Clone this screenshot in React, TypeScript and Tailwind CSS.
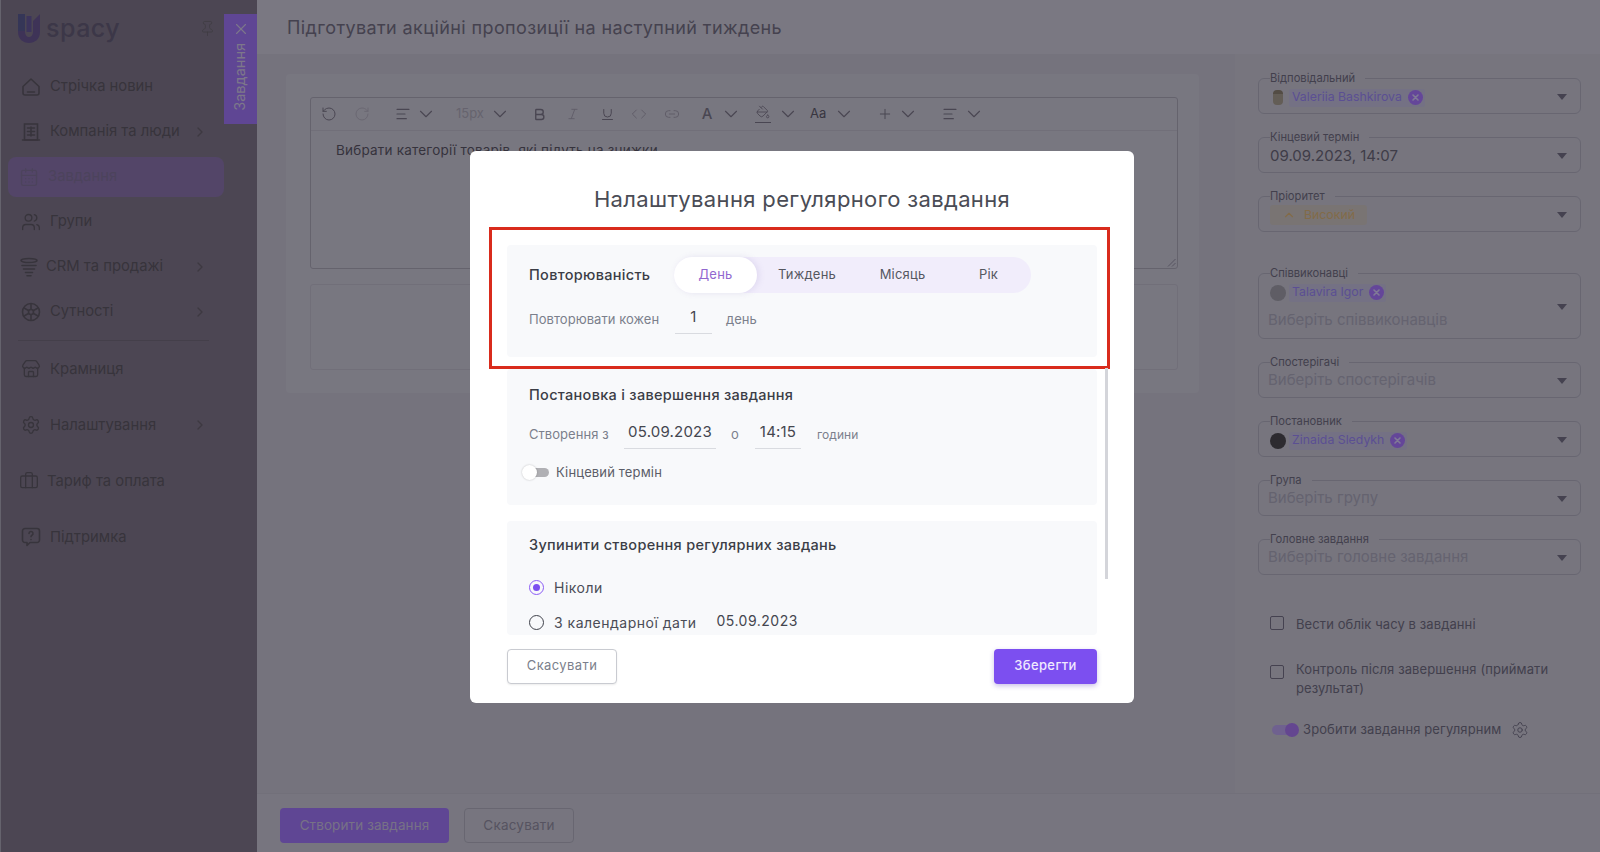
import React from "react";
import {
  CalendarDays, Users, ChevronRight, Store, Settings, Briefcase,
  Pin, X, RotateCcw, RotateCw, ChevronDown, Bold, Italic, Underline, Code, Link2, Plus, AlignLeft,
  PaintBucket, ChevronUp,
} from "lucide-react";

type IconProps = { size?: number; strokeWidth?: number; className?: string };

function HomeIcon({ size = 20, strokeWidth = 1.6, className }: IconProps) {
  return (
    <svg width={size} height={size} viewBox="0 0 20 20" fill="none" stroke="currentColor" strokeWidth={strokeWidth} strokeLinejoin="round" strokeLinecap="round" className={className}>
      <path d="M2 9.500 10 2l8 7.500V16a2 2 0 0 1-2 2H4a2 2 0 0 1-2-2z" />
      <path d="M6.500 15h7" />
    </svg>
  );
}
function BuildingIcon({ size = 20, strokeWidth = 1.6, className }: IconProps) {
  return (
    <svg width={size} height={size} viewBox="0 0 20 20" fill="none" stroke="currentColor" strokeWidth={strokeWidth} strokeLinecap="round" className={className}>
      <path d="M3.500 2h13v16h-13z" />
      <path d="M1.500 18h17M6.500 6h7M6.500 9.500h7M6.500 13h7M10 5v9" />
    </svg>
  );
}
function FunnelIcon({ size = 20, strokeWidth = 1.8, className }: IconProps) {
  return (
    <svg width={size} height={size} viewBox="0 0 20 20" fill="none" stroke="currentColor" strokeWidth={strokeWidth} strokeLinecap="round" className={className}>
      <ellipse cx="10" cy="3.500" rx="8" ry="2" />
      <path d="M3 8.500h14M4.500 12h11M6.500 15.500h7M8 18.800h4" />
    </svg>
  );
}
function WheelIcon({ size = 20, strokeWidth = 1.6, className }: IconProps) {
  return (
    <svg width={size} height={size} viewBox="0 0 20 20" fill="none" stroke="currentColor" strokeWidth={strokeWidth} strokeLinecap="round" className={className}>
      <circle cx="10" cy="10" r="8.500" />
      <path d="M10 2v5M10 13v5M3 6l4.500 2.500M12.500 11.500 17 14M3 14l4.500-2.500M12.500 8.500 17 6" />
      <circle cx="10" cy="10" r="2.500" />
    </svg>
  );
}
function SupportIcon({ size = 20, strokeWidth = 1.6, className }: IconProps) {
  return (
    <svg width={size} height={size} viewBox="0 0 20 20" fill="none" stroke="currentColor" strokeWidth={strokeWidth} strokeLinecap="round" strokeLinejoin="round" className={className}>
      <path d="M4 1.500h12a2.500 2.500 0 0 1 2.500 2.500v9a2.500 2.500 0 0 1-2.500 2.500H9l-3 3v-3H4A2.500 2.500 0 0 1 1.500 13V4A2.500 2.500 0 0 1 4 1.500z" />
      <path d="M8 6.500a2 2 0 1 1 3 1.700c-.7.4-1 .8-1 1.600M10 12.500v.1" />
    </svg>
  );
}

const navTop = [
  { label: "Стрічка новин", icon: HomeIcon, x: "ml-[13px]", gap: "ml-[9px]" },
  { label: "Компанія та люди", icon: BuildingIcon, arrow: true, x: "ml-[13px]", gap: "ml-[9px]" },
  { label: "Завдання", icon: CalendarDays, active: true, x: "ml-[11px]", gap: "ml-[9px]" },
  { label: "Групи", icon: Users, x: "ml-[13px]", gap: "ml-[9px]" },
  { label: "CRM та продажі", icon: FunnelIcon, arrow: true, x: "ml-[11px]", gap: "ml-[7px]" },
  { label: "Сутності", icon: WheelIcon, arrow: true, x: "ml-[13px]", gap: "ml-[9px]" },
];
const navBottom = [
  { label: "Крамниця", icon: Store, x: "ml-[13px]", gap: "ml-[9px]" },
  { label: "Налаштування", icon: Settings, arrow: true, x: "ml-[13px]", gap: "ml-[9px]" },
  { label: "Тариф та оплата", icon: Briefcase, x: "ml-[11px]", gap: "ml-[8px]" },
  { label: "Підтримка", icon: SupportIcon, x: "ml-[13px]", gap: "ml-[9px]" },
];

function NavItem({ item, tall }: { item: any; tall?: boolean }) {
  const Icon = item.icon;
  const tone = item.active ? "text-[#7f709a]" : "text-[#5d5764]";
  return (
    <div className={`flex items-center ${tall ? "h-[56px]" : "h-[45px]"}`}>
      <div className={`flex items-center w-[216px] h-[40px] rounded-[8px] ${item.active ? "bg-[#8a74ad]" : ""}`}>
        <Icon size={20} strokeWidth={1.6} className={`${item.x} ${tone}`} />
        <span className={`${item.gap} text-[14.800px] ${tone}`}>{item.label}</span>
        {item.arrow && <ChevronRight size={16} className="ml-auto mr-[16px] text-[#665f6d]" />}
      </div>
    </div>
  );
}

function Sidebar() {
  return (
    <aside className="relative w-[257px] h-full shrink-0 bg-[#7f768a] border-l border-[#a8a5b6]">
      <div className="flex items-center h-[64px] pl-[14px] pb-[8px]">
        <svg width="28" height="31" viewBox="0 0 28 31" fill="none">
          <path d="M14 3v16" stroke="#65589a" strokeWidth="5" />
          <path d="M3 1h7v18c0 3 2 5 4 5s4-2 4-5V8l7-7v18c0 7-5 11-11 11S3 26 3 19z" fill="#685692" />
          <path d="M3 1h7v17H3z" fill="#595a92" />
        </svg>
        <span className="ml-[3px] text-[25px] leading-none font-medium tracking-[0.5px] text-[#645c78]">spacy</span>
        <Pin size={17} strokeWidth={1.2} className="ml-[79px] text-[#6a6470]" />
      </div>
      <nav className="pl-[7px]">
        {navTop.map((n) => <NavItem key={n.label} item={n} />)}
        <div className="ml-[10px] mt-[6px] w-[191px] h-px bg-[#726a7c]" />
        {navBottom.map((n) => <NavItem key={n.label} item={n} tall />)}
      </nav>
      <div className="absolute left-[223px] top-[14px] w-[33px] h-[110px] bg-[#9e75f7] flex flex-col items-center pt-[6px]">
        <X size={18} strokeWidth={1.5} className="text-[#d0c6e6]" />
        <span className="mt-[5px] text-[14.500px] leading-none text-[#d0c6e6] [writing-mode:vertical-rl] rotate-180">Завдання</span>
      </div>
    </aside>
  );
}

function Chev() {
  return <ChevronDown size={22} strokeWidth={1.2} className="-m-[3px] text-[#7b7689]" />;
}

function Toolbar() {
  const c = "text-[#7b7689]";
  return (
    <div className="flex items-center h-[33px] pl-[10px] border-b border-[#bcb9ca]">
      <RotateCcw size={16} strokeWidth={1.5} className={c} />
      <RotateCw size={16} strokeWidth={1.5} className="ml-[17px] text-[#b1adbe]" />
      <AlignLeft size={16} strokeWidth={1.8} className={`ml-[25px] ${c}`} />
      <span className="ml-[7px]"><Chev /></span>
      <span className="ml-[22px] w-[30px] text-[13px] text-[#aaa6b8]">15px</span>
      <span className="ml-[6px]"><Chev /></span>
      <Bold size={15} strokeWidth={2.2} className={`ml-[24px] ${c}`} />
      <Italic size={14} strokeWidth={1.6} className="ml-[19px] text-[#a09cae]" />
      <Underline size={15} strokeWidth={1.6} className={`ml-[20px] ${c}`} />
      <Code size={16} strokeWidth={1.5} className="ml-[16px] text-[#a09cae]" />
      <Link2 size={16} strokeWidth={1.5} className="ml-[17px] text-[#a09cae]" />
      <span className={`ml-[19px] w-[16px] text-center text-[15px] font-medium ${c}`}>A</span>
      <span className="ml-[8px]"><Chev /></span>
      <span className="ml-[16px] w-[16px] h-[18px] flex justify-center border-b-[1.5px] border-[#7b7689]"><PaintBucket size={14} strokeWidth={1.5} className={c} /></span>
      <span className="ml-[9px]"><Chev /></span>
      <span className="ml-[14px] w-[20px] text-[13px] text-[#5f5b6c]">Aa</span>
      <span className="ml-[6px]"><Chev /></span>
      <Plus size={16} strokeWidth={1.5} className={`ml-[25px] ${c}`} />
      <span className="ml-[7px]"><Chev /></span>
      <AlignLeft size={16} strokeWidth={1.8} className={`ml-[26px] ${c}`} />
      <span className="ml-[8px]"><Chev /></span>
    </div>
  );
}

function Field({ label, h = "h-[43px]", arrow = "top-[9px]", children }: { label: string; h?: string; arrow?: string; children?: React.ReactNode }) {
  return (
    <fieldset className={`relative w-[323px] ${h} px-[11px] rounded-[6px] border border-[#aeabbd]`}>
      <legend className="pr-[10px] text-[11.200px] leading-[14px] text-[#6f6b80]">{label}</legend>
      {children}
      <svg className={`absolute right-[13px] ${arrow}`} width="10" height="6" viewBox="0 0 10 6"><path d="M0 0h10L5 6z" fill="#736f85" /></svg>
    </fieldset>
  );
}

function Chip({ name, avatar, children }: { name: string; avatar: string; children?: React.ReactNode }) {
  return (
    <div className="flex items-center h-[19px] mt-[3px]">
      <span className={`w-[16px] h-[16px] rounded-full shrink-0 flex items-center justify-center ${avatar}`}>{children}</span>
      <span className="ml-[3px] flex items-center h-[18px] pl-[3px] pr-[2px] rounded-[3px] bg-[#c1bddc]">
        <span className="text-[12.300px] text-[#9884f5]">{name}</span>
        <svg className="ml-[6px]" width="15" height="15" viewBox="0 0 15 15">
          <circle cx="7.500" cy="7.500" r="7.500" fill="#a775ff" />
          <path d="M5 5l5 5M10 5l-5 5" stroke="#d6cbfa" strokeWidth="1.6" strokeLinecap="round" />
        </svg>
      </span>
    </div>
  );
}

function Placeholder({ text, mt = "mt-[1px]" }: { text: string; mt?: string }) {
  return <div className={`text-[15px] leading-[20px] text-[#a8a5ba] -ml-[2px] ${mt}`}>{text}</div>;
}

function RightPanel() {
  return (
    <div className="w-[365px] shrink-0 h-full pl-[23px] pt-[1px] bg-[#c6c3d3] flex flex-col">
      <div className="flex flex-col gap-[16px] pt-[16px]">
        <Field label="Відповідальний">
          <Chip name="Valeriia Bashkirova" avatar="bg-transparent">
            <span className="w-[10px] h-[15px] rounded-[4px] bg-[#a69b8f] border-t-[4px] border-[#8a7f72]" />
          </Chip>
        </Field>
        <Field label="Кінцевий термін"><div className="text-[15px] leading-[22px] mt-[1px] text-[#6a6678]">09.09.2023, 14:07</div></Field>
        <Field label="Пріоритет">
          <div className="inline-flex items-center h-[20px] px-[12px] mt-[2px] gap-[8px] bg-[#cac1c0] rounded-[3px]">
            <ChevronUp size={14} className="text-[#d9b379]" />
            <span className="text-[12.300px] text-[#d9b379]">Високий</span>
          </div>
        </Field>
        <div className="mt-[18px]">
          <Field label="Співвиконавці" h="h-[73px]" arrow="top-[24px]">
            <Chip name="Talavira Igor" avatar="bg-[#9e9ba8]" />
            <Placeholder text="Виберіть співвиконавців" mt="mt-[8px]" />
          </Field>
        </div>
        <Field label="Спостерігачі"><Placeholder text="Виберіть спостерігачів" /></Field>
        <Field label="Постановник"><Chip name="Zinaida Sledykh" avatar="bg-[#4b4850]" /></Field>
        <Field label="Група"><Placeholder text="Виберіть групу" /></Field>
        <Field label="Головне завдання"><Placeholder text="Виберіть головне завдання" /></Field>
      </div>
      <label className="flex items-start ml-[12px] mt-[40px]">
        <span className="w-[14px] h-[14px] mt-[1px] border-[1.5px] border-[#736f85] rounded-[2px]" />
        <span className="ml-[12px] text-[13px] leading-[19px] tracking-[0.1px] text-[#6f6b80]">Вести облік часу в завданні</span>
      </label>
      <label className="flex items-start ml-[12px] mt-[26px]">
        <span className="w-[14px] h-[14px] mt-[5px] border-[1.5px] border-[#736f85] rounded-[2px] shrink-0" />
        <span className="ml-[12px] w-[270px] text-[13px] leading-[19px] tracking-[0.1px] text-[#6f6b80]">Контроль після завершення (приймати результат)</span>
      </label>
      <div className="flex items-center ml-[14px] mt-[22px]">
        <span className="relative w-[26px] h-[10px] rounded-full bg-[#b9a2ee]">
          <span className="absolute -right-[1px] -top-[2px] w-[14px] h-[14px] rounded-full bg-[#a775f0]" />
        </span>
        <span className="ml-[5px] text-[13px] tracking-[0.1px] text-[#6f6b80]">Зробити завдання регулярним</span>
        <Settings size={18} strokeWidth={1.3} className="ml-[10px] text-[#736f85]" />
      </div>
    </div>
  );
}

function UnderlineInput({ value, w }: { value: string; w: string }) {
  return (
    <span className={`${w} h-[28px] flex justify-center items-center pb-[3px] border-b border-[#d9dbe0] text-[15px] tracking-[0.2px] text-[#44464f]`}>{value}</span>
  );
}

function Radio({ checked }: { checked?: boolean }) {
  return (
    <span className={`w-[15px] h-[15px] rounded-full border-[1.5px] flex items-center justify-center shrink-0 ${checked ? "border-[#8b5cf6]" : "border-[#3f414a]"}`}>
      {checked && <span className="w-[7px] h-[7px] rounded-full bg-[#7c4ff0]" />}
    </span>
  );
}

function Modal() {
  return (
    <div className="relative ml-[4px] mt-[1px] w-[664px] h-[552px] bg-white rounded-[6px] flex flex-col px-[37px]">
      <h2 className="h-[94px] pt-[34px] text-center text-[22px] leading-[28px] tracking-[0.35px] font-normal text-[#4a4c55]">Налаштування регулярного завдання</h2>
      <div className="h-[390px] overflow-hidden flex flex-col">
        <section className="h-[112px] shrink-0 bg-[#f8f9fb] rounded-[4px] px-[22px] pt-[12px]">
          <div className="flex items-center">
            <span className="w-[145px] text-[14.500px] font-medium tracking-[0.3px] text-[#3b3d46]">Повторюваність</span>
            <div className="flex items-center w-[357px] h-[36px] rounded-full bg-[#f1edfb] text-[13px] tracking-[0.2px] text-[#55575f]">
              <span className="w-[83px] h-[36px] flex items-center justify-center rounded-full bg-white shadow-[2px_0_6px_rgba(120,100,180,0.15)] text-[#9168cf]">День</span>
              <span className="w-[100px] text-center">Тиждень</span>
              <span className="w-[91px] text-center">Місяць</span>
              <span className="w-[83px] text-center pr-[2px]">Рік</span>
            </div>
          </div>
          <div className="flex items-center mt-[13px] text-[13px] tracking-[0.05px] text-[#7b7f8c]">
            <span className="w-[146px]">Повторювати кожен</span>
            <UnderlineInput value="1" w="w-[37px]" />
            <span className="ml-[14px]">день</span>
          </div>
        </section>
        <section className="mt-[12px] h-[136px] shrink-0 bg-[#f8f9fb] rounded-[4px] px-[22px] pt-[16px]">
          <h3 className="text-[14.500px] leading-[20px] font-medium tracking-[0.3px] text-[#3b3d46]">Постановка і завершення завдання</h3>
          <div className="flex items-center mt-[16px] text-[13px] tracking-[0.05px] text-[#7b7f8c]">
            <span className="w-[95px]">Створення з</span>
            <UnderlineInput value="05.09.2023" w="w-[92px]" />
            <span className="ml-[15px] w-[24px]">о</span>
            <UnderlineInput value="14:15" w="w-[46px]" />
            <span className="ml-[16px] text-[12px]">години</span>
          </div>
          <div className="flex items-center mt-[14px] -ml-[6px]">
            <span className="relative w-[26px] h-[9px] rounded-full bg-[#b0b0b4]">
              <span className="absolute -left-[1px] -top-[3px] w-[15px] h-[15px] rounded-full bg-white shadow-[0_0_2px_rgba(0,0,0,0.25)]" />
            </span>
            <span className="ml-[7px] text-[13px] tracking-[0.15px] text-[#5b5d68]">Кінцевий термін</span>
          </div>
        </section>
        <section className="mt-[16px] flex-1 min-h-0 bg-[#f8f9fb] rounded-[4px] px-[22px] pt-[14px] overflow-hidden">
          <h3 className="text-[14.500px] leading-[20px] font-medium tracking-[0.3px] text-[#3b3d46]">Зупинити створення регулярних завдань</h3>
          <div className="flex items-center mt-[23px] h-[20px]">
            <Radio checked />
            <span className="ml-[10px] text-[14px] tracking-[0.5px] text-[#4a4c56]">Ніколи</span>
          </div>
          <div className="flex items-center mt-[15px] h-[20px]">
            <Radio />
            <span className="ml-[10px] text-[14px] tracking-[0.5px] text-[#4a4c56]">З календарної дати</span>
            <span className="ml-[20px] -mt-[4px] text-[14px] tracking-[0.5px] text-[#44464f]">05.09.2023</span>
          </div>
        </section>
      </div>
      <div className="flex justify-between mt-[14px] h-[35px]">
        <button className="w-[110px] h-[35px] rounded-[4px] bg-white border border-[#c9cbd1] shadow-[0_1px_2px_rgba(0,0,0,0.08)] text-[13px] tracking-[0.4px] text-[#7b7f8c]">Скасувати</button>
        <button className="w-[103px] h-[35px] rounded-[4px] bg-[#7c4ff0] shadow-[0_2px_5px_rgba(80,50,180,0.3)] text-[13px] font-medium tracking-[0.4px] text-[#f0eaff]">Зберегти</button>
      </div>
      <div className="absolute left-[19px] top-[76px] w-[621px] h-[142px] border-[3px] border-[#d92b1c]" />
      <div className="absolute left-[635px] top-[217px] w-[3px] h-[211px] bg-[#d4d5da]" />
    </div>
  );
}

export default function App() {
  return (
    <div className="relative w-[1600px] h-[852px] overflow-hidden flex font-['Inter','Noto_Sans',sans-serif] bg-[#c3c0d0]">
      <Sidebar />
      <main className="flex-1 min-w-0 h-full flex flex-col">
        <header className="h-[54px] shrink-0 flex items-center pl-[30px] bg-[#cbc8d9]">
          <h1 className="text-[18px] font-normal tracking-[0.4px] text-[#736e84]">Підготувати акційні пропозиції на наступний тиждень</h1>
        </header>
        <div className="flex-1 min-h-0 flex">
          <div className="flex-1 min-w-0 pl-[29px] pr-[36px] pt-[20px]">
            <div className="h-[319px] bg-[#c9c6d6] rounded-[4px] pl-[24px] pr-[21px] pt-[23px]">
              <div className="relative h-[172px] border border-[#a8a5b6] rounded-[3px]">
                <Toolbar />
                <p className="pl-[25px] pt-[9px] text-[13.500px] tracking-[0.2px] text-[#5a5666]">Вибрати категорії товарів, які підуть на знижки</p>
                <svg className="absolute right-[1px] bottom-[1px]" width="9" height="9" viewBox="0 0 9 9" stroke="#8f8ba1" strokeWidth="1"><path d="M1 8.500 8.500 1M5 8.500 8.500 5" /></svg>
              </div>
              <div className="h-[86px] mt-[15px] border border-[#bcb9ca] rounded-[3px]" />
            </div>
          </div>
          <RightPanel />
        </div>
        <footer className="h-[59px] shrink-0 flex items-start gap-[15px] pl-[23px] pt-[14px] bg-[#c7c4d4] border-t border-[#bebbcb]">
          <button className="w-[169px] h-[35px] rounded-[4px] bg-[#9e75f7] text-[13.500px] tracking-[0.1px] text-[#c6bde0]">Створити завдання</button>
          <button className="w-[110px] h-[35px] rounded-[4px] border border-[#aeabbd] text-[13.500px] tracking-[0.2px] text-[#8f8ba1]">Скасувати</button>
        </footer>
      </main>
      <div className="absolute inset-0 bg-black/40 flex items-center justify-center">
        <Modal />
      </div>
    </div>
  );
}
